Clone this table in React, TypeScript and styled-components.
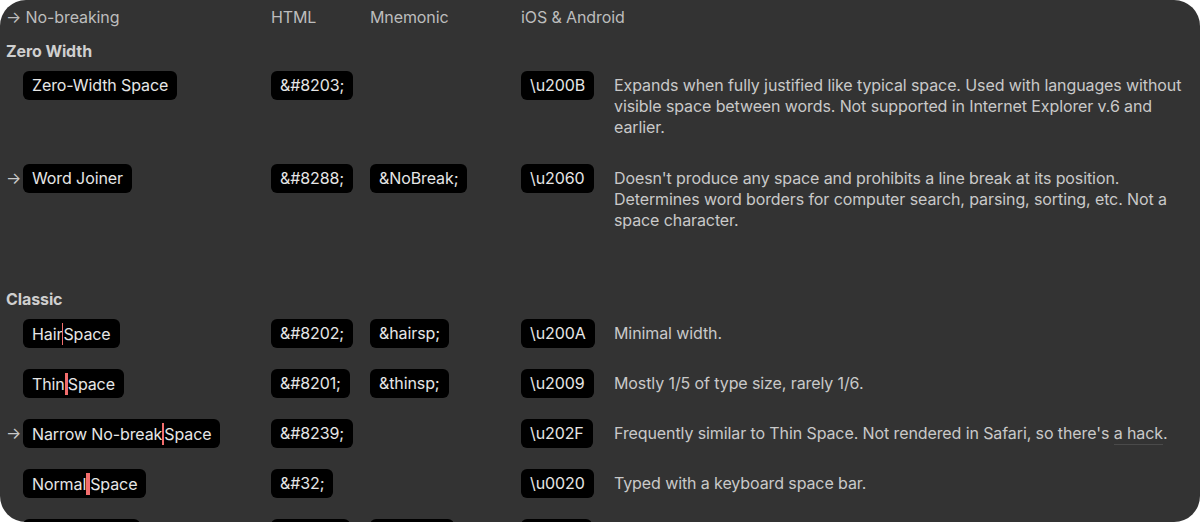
import React from "react";
import styled, { createGlobalStyle } from "styled-components";

const Global = createGlobalStyle`
  html, body { margin: 0; padding: 0; background: #ffffff; }
  body { font-family: Inter, "Liberation Sans", Arial, sans-serif; }
`;

const Panel = styled.div`
  box-sizing: border-box;
  width: 1200px;
  height: 522px;
  overflow: hidden;
  background: #333333;
  border-radius: 26px;
  padding: 7px 10px 0 6px;
  font-size: 16px;
  letter-spacing: -0.1px;
  line-height: 21px;
  color: #c9c9c9;
`;

const Grid = styled.div`
  display: grid;
  grid-template-columns: 17px 248px 99px 151px 93px 1fr;
  align-items: start;
`;

const HeaderCell = styled.div<{ $span?: number }>`
  grid-column: span ${(p) => p.$span ?? 1};
  color: #bdbdbd;
`;

const SectionTitle = styled.div<{ $top: number }>`
  grid-column: 1 / -1;
  font-weight: 700;
  color: #cfcfcf;
  margin-top: ${(p) => p.$top}px;
  margin-bottom: 9px;
`;

const Arrow = styled.div`
  color: #c9c9c9;
  padding-top: 4px;
  height: 21px;
`;

const Cell = styled.div<{ $pb: number }>`
  padding-bottom: ${(p) => p.$pb}px;
`;

const Pill = styled.span`
  display: inline-block;
  background: #000000;
  color: #e6e6e6;
  border-radius: 6px;
  padding: 4px 9px 4px 9px;
  height: 21px;
  white-space: nowrap;
`;

const Gap = styled.span<{ $w: number }>`
  display: inline-block;
  width: ${(p) => p.$w}px;
  height: 22px;
  background: #f26d6d;
  vertical-align: -5px;
`;

const Desc = styled.div<{ $pb: number }>`
  padding-top: 4px;
  padding-bottom: ${(p) => p.$pb}px;
  color: #c9c9c9;
`;

const Link = styled.span`
  border-bottom: 1px solid #4a4a4a;
  padding-bottom: 1px;
`;

type Row = {
  arrow?: boolean;
  name: React.ReactNode;
  html: string;
  mn?: string;
  code: string;
  desc: React.ReactNode;
  pb?: number;
};

const zero: Row[] = [
  {
    name: "Zero-Width Space",
    html: "&#8203;",
    code: "\\u200B",
    desc:
      "Expands when fully justified like typical space. Used with languages without visible space between words. Not supported in Internet Explorer v.6 and earlier.",
    pb: 26,
  },
  {
    arrow: true,
    name: "Word Joiner",
    html: "&#8288;",
    mn: "&NoBreak;",
    code: "\\u2060",
    desc:
      "Doesn't produce any space and prohibits a line break at its position. Determines word borders for computer search, parsing, sorting, etc. Not a space character.",
    pb: 26,
  },
];

const classic: Row[] = [
  {
    name: (
      <>
        Hair<Gap $w={1} />Space
      </>
    ),
    html: "&#8202;",
    mn: "&hairsp;",
    code: "\\u200A",
    desc: "Minimal width.",
  },
  {
    name: (
      <>
        Thin<Gap $w={3} />Space
      </>
    ),
    html: "&#8201;",
    mn: "&thinsp;",
    code: "\\u2009",
    desc: "Mostly 1/5 of type size, rarely 1/6.",
  },
  {
    arrow: true,
    name: (
      <>
        Narrow No-break<Gap $w={2} />Space
      </>
    ),
    html: "&#8239;",
    code: "\\u202F",
    desc: (
      <>
        Frequently similar to Thin Space. Not rendered in Safari, so there's <Link>a hack</Link>.
      </>
    ),
  },
  {
    name: (
      <>
        Normal<Gap $w={4} />Space
      </>
    ),
    html: "&#32;",
    code: "\\u0020",
    desc: "Typed with a keyboard space bar.",
  },
  {
    name: "Figure Space",
    html: "&#8199;",
    mn: "&numsp;",
    code: "\\u2007",
    desc: "Equal to the width of a digit.",
  },
];

function renderRow(r: Row, i: number) {
  const pb = 21;
  return (
    <React.Fragment key={i}>
      <Arrow>{r.arrow ? "→" : ""}</Arrow>
      <Cell $pb={pb}>
        <Pill>{r.name}</Pill>
      </Cell>
      <Cell $pb={pb}>
        <Pill>{r.html}</Pill>
      </Cell>
      <Cell $pb={pb}>{r.mn ? <Pill>{r.mn}</Pill> : null}</Cell>
      <Cell $pb={pb}>
        <Pill>{r.code}</Pill>
      </Cell>
      <Desc $pb={r.pb ?? 25}>{r.desc}</Desc>
    </React.Fragment>
  );
}

export default function App() {
  return (
    <>
      <Global />
      <Panel>
        <Grid>
          <HeaderCell $span={2}>→ No-breaking</HeaderCell>
          <HeaderCell>HTML</HeaderCell>
          <HeaderCell>Mnemonic</HeaderCell>
          <HeaderCell $span={2}>iOS &amp; Android</HeaderCell>
          <SectionTitle $top={13}>Zero Width</SectionTitle>
          {zero.map(renderRow)}
          <SectionTitle $top={32}>Classic</SectionTitle>
          {classic.map(renderRow)}
        </Grid>
      </Panel>
    </>
  );
}
